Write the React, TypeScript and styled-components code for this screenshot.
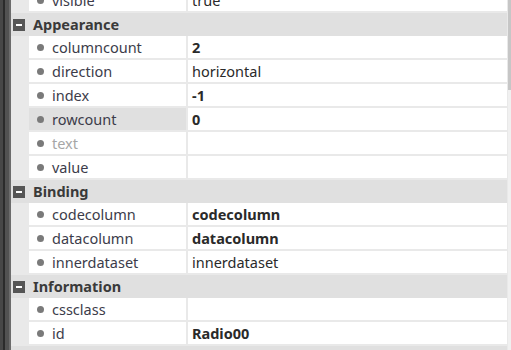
import React from "react";
import styled, { createGlobalStyle } from "styled-components";

type Prop = {
    name: string;
    value?: string;
    bold?: boolean;
    disabled?: boolean;
    selected?: boolean;
};

type Group = {
    title: string;
    props: Prop[];
};

const groups: Group[] = [
    {
        title: "Appearance",
        props: [
            { name: "columncount", value: "2", bold: true },
            { name: "direction", value: "horizontal" },
            { name: "index", value: "-1", bold: true },
            { name: "rowcount", value: "0", bold: true, selected: true },
            { name: "text", disabled: true },
            { name: "value" },
        ],
    },
    {
        title: "Binding",
        props: [
            { name: "codecolumn", value: "codecolumn", bold: true },
            { name: "datacolumn", value: "datacolumn", bold: true },
            { name: "innerdataset", value: "innerdataset" },
        ],
    },
    {
        title: "Information",
        props: [
            { name: "cssclass" },
            { name: "id", value: "Radio00", bold: true },
        ],
    },
];

const GlobalStyle = createGlobalStyle`
    html, body {
        margin: 0;
        padding: 0;
        background: #ffffff;
    }
    body {
        font-family: "Noto Sans", "Noto Sans CJK KR", sans-serif;
        font-size: 14px;
        color: #333;
    }
`;

const Panel = styled.div`
    display: flex;
    width: 511px;
    height: 350px;
    overflow: hidden;
    background: #ffffff;
`;

const SideStrip = styled.div`
    width: 11px;
    flex: none;
    background: linear-gradient(
        to right,
        #474747 0 3px,
        #2b2b2b 3px 5px,
        #525252 5px 9px,
        #6c6c6c 9px 11px
    );
`;

const Grid = styled.div`
    width: 496px;
    flex: none;
    display: flex;
    flex-direction: column;
    background: #e9e9e9;
    margin-top: -11px;
`;

const Gutter = styled.div`
    width: 1px;
    flex: none;
    background: #e9e9e9;
`;

const Scrollbar = styled.div`
    width: 3px;
    flex: none;
    display: flex;
    flex-direction: column;
    background: #f0f0f0;
`;

const Thumb = styled.div`
    height: 90px;
    background: #c6c6c6;
`;

const HeaderRow = styled.div`
    height: 23px;
    flex: none;
    display: flex;
    align-items: center;
    gap: 8px;
    padding-left: 2px;
    background: #e0e0e0;
`;

const Toggle = styled.span`
    width: 12px;
    height: 12px;
    display: flex;
    align-items: center;
    justify-content: center;
    background: #555555;
    &::after {
        content: "";
        width: 6px;
        height: 2px;
        background: #ffffff;
    }
`;

const HeaderTitle = styled.span`
    font-weight: 700;
    font-size: 14.5px;
    color: #3a3a3a;
    line-height: 23px;
`;

const PropRow = styled.div`
    height: 22px;
    flex: none;
    display: flex;
    gap: 2px;
    padding-left: 18px;
    margin-bottom: 2px;
`;

const NameCell = styled.div<{ $selected?: boolean }>`
    width: 157px;
    flex: none;
    display: flex;
    align-items: center;
    gap: 8px;
    padding-left: 8px;
    box-sizing: border-box;
    background: ${p => (p.$selected ? "#e0e0e0" : "#ffffff")};
`;

const Bullet = styled.span`
    width: 7px;
    height: 7px;
    border-radius: 50%;
    background: #7a7a7a;
    flex: none;
`;

const Name = styled.span<{ $disabled?: boolean }>`
    color: ${p => (p.$disabled ? "#a6a6a6" : "#3c3c4a")};
    font-size: 14.5px;
    line-height: 22px;
`;

const ValueCell = styled.div<{ $bold?: boolean }>`
    flex: 1;
    display: flex;
    align-items: center;
    padding-left: 4px;
    background: #ffffff;
    color: #2a2a2a;
    font-size: 14.5px;
    line-height: 22px;
    font-weight: ${p => (p.$bold ? 700 : 400)};
`;

const Property = ({ prop }: { prop: Prop }) => (
    <PropRow>
        <NameCell $selected={prop.selected}>
            <Bullet />
            <Name $disabled={prop.disabled}>{prop.name}</Name>
        </NameCell>
        <ValueCell $bold={prop.bold}>{prop.value}</ValueCell>
    </PropRow>
);

const App = () => {
    return (
        <>
            <GlobalStyle />
            <Panel>
                <SideStrip />
                <Grid>
                    <Property prop={{ name: "visible", value: "true" }} />
                    {groups.map(g => (
                        <React.Fragment key={g.title}>
                            <HeaderRow>
                                <Toggle />
                                <HeaderTitle>{g.title}</HeaderTitle>
                            </HeaderRow>
                            {g.props.map(p => (
                                <Property key={p.name} prop={p} />
                            ))}
                        </React.Fragment>
                    ))}
                    <HeaderRow />
                </Grid>
                <Gutter />
                <Scrollbar>
                    <Thumb />
                </Scrollbar>
            </Panel>
        </>
    );
};

export default App;
